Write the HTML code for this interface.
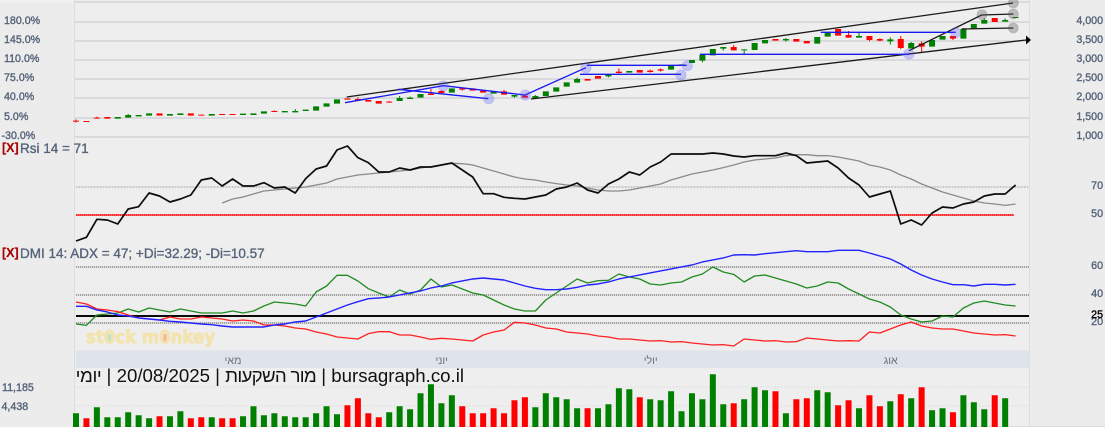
<!DOCTYPE html>
<html lang="he"><head><meta charset="utf-8"><title>bursagraph</title>
<style>
html,body{margin:0;padding:0;width:1105px;height:427px;overflow:hidden;background:#ececec}
svg{position:absolute;left:0;top:0;font-family:"Liberation Sans",sans-serif}
svg *{vector-effect:non-scaling-stroke}
.n{fill:none;stroke-linejoin:round}
.ax{font-size:10.67px;fill:#56647a;stroke:#56647a;stroke-width:.38}
.mo{font-size:10.67px;fill:#6a7079;text-anchor:middle}
.end{text-anchor:end}
.ti{font-size:13.5px;fill:#56647a;stroke:#56647a;stroke-width:.35}
.x{font-size:12.5px;font-weight:bold;fill:#a80000;stroke:#a80000;stroke-width:.15}
#t{position:absolute;right:641px;top:365px;height:22px;line-height:22px;direction:rtl;white-space:nowrap;font:18.67px/22px "Liberation Sans","Noto Sans CJK JP",sans-serif;color:#111}
#t span{letter-spacing:-.7px}
#t span.y{letter-spacing:-.4px}
</style></head><body>
<svg width="1105" height="427" viewBox="0 0 1105 427">
<rect x="0" y="0" width="1105" height="427" fill="#ececec"/>
<rect x="75" y="0" width="954" height="427" fill="#eeeeee"/>
<rect x="0" y="0" width="74" height="2" fill="#f1f1f1"/>
<path d="M74.5 0V427M1029.5 0V427" stroke="#dedede" stroke-width="1"/>
<path d="M75 426.5H1105" stroke="#dcdcdc" stroke-width="1"/>

<!-- price grid -->
<path d="M75 2H1029M75 22H1029M75 41H1029M75 60H1029M75 79H1029M75 98H1029M75 118H1029M75 137H1029" stroke="#d1d4d7" stroke-width="1.6"/>

<!-- candles -->
<g transform="translate(76 0) scale(10.44 .33333)">
<path class="n" stroke="#008000" stroke-width="1" d="M5 342V353M21 327V337M31 288V303M32 290V297M42 285V293M44 285V295M48 233V248M51 225V232M57 197V209M60 165V187M62 141V152M64 148V163M68 114V125M75 99V113M78 112V134M80 126V145M85 84V116M87 55V71M89 55V65"/>
<path class="n" stroke="#ff0000" stroke-width="1" d="M0 358V368M2 350V356M19 331V336M27 292V302M30 303V308M34 267V285M35 270V279M37 265V272M41 270V284M52 205V220M55 209V218M56 205V215M63 135V151M74 93V113M76 108V124M77 115V124M79 108V147M81 124V157M84 108V120"/>
<path class="n" stroke="#008000" stroke-width="6" d="M4 351V356M5 345V353M6 345V349M7 340V347M9 342V347M10 340V345M13 342V347M16 341V345M17 340V345M18 334V341M20 333V337M21 333V337M22 329V333M23 319V332M24 310V320M25 298V311M31 294V303M32 293V297M33 282V293M36 265V278M40 274V281M42 285V290M44 288V295M45 274V288M46 262V275M47 247V260M48 237V248M51 225V229M53 213V218M57 197V209M58 193V197M59 180V189M60 165V182M61 147V166M62 141V146M64 148V151M65 129V150M66 120V130M68 117V121M71 111V131M72 98V110M75 108V113M78 118V124M80 129V145M82 120V140M83 108V119M85 87V116M86 72V85M87 60V71M89 60V65M90 51V54"/>
<path class="n" stroke="#ff0000" stroke-width="6" d="M0 362V365M1 363V366M2 353V356M3 351V356M8 340V347M11 340V347M12 344V347M14 342V345M15 342V345M19 333V336M26 295V299M27 297V302M28 300V305M29 303V311M30 305V308M34 281V285M35 273V279M37 265V269M38 265V272M39 271V278M41 274V284M43 287V293M49 237V242M50 228V236M52 215V219M54 210V218M55 212V216M56 208V212M63 141V151M67 117V122M69 117V125M70 123V130M73 87V107M74 105V113M76 108V120M77 117V122M79 117V144M81 130V140M84 108V116M88 54V66"/>
</g>

<!-- trendlines -->
<g class="n" stroke="#1a1a1a" stroke-width="1.3">
<path d="M346.7 97L1013 3"/>
<path d="M531 99L1026 40"/>
<path d="M909 50.7L981.7 15L1013.3 14"/>
<path d="M961.7 29L1013.3 28"/>
</g>
<path d="M1026 35.5L1031 40L1026 44.5Z" fill="#000"/>
<g class="n" stroke="#1818f0" stroke-width="1.3">
<path d="M345 102.7L443.3 85.7L525 95L586 67.7"/>
<path d="M398 89.3L488.3 98.7"/>
<path d="M586.7 65.3H686.7"/>
<path d="M580 74.3H681"/>
<path d="M700 54.3H909"/>
<path d="M820.7 32.3H955.7"/>
</g>
<g fill="#5050ff" fill-opacity=".28" stroke="#5050ff" stroke-opacity=".12">
<circle cx="443.3" cy="86" r="5.3"/><circle cx="488.7" cy="98.7" r="5.3"/><circle cx="525.3" cy="95" r="5.3"/><circle cx="586" cy="68" r="5.3"/><circle cx="687.3" cy="65.7" r="5.3"/><circle cx="681" cy="75" r="5.3"/><circle cx="909" cy="54" r="5.3"/><circle cx="955.7" cy="32.7" r="5.3"/>
</g>
<g fill="#555" fill-opacity=".33" stroke="#555" stroke-opacity=".2">
<circle cx="982" cy="14.7" r="5"/><circle cx="1013.3" cy="14" r="5"/><circle cx="1013.3" cy="28" r="5"/><circle cx="1013.3" cy="3" r="5"/>
</g>

<!-- price axes -->
<g class="ax">
<text x="4" y="24">180.0%</text><text x="4" y="43">145.0%</text><text x="4" y="62">110.0%</text><text x="4" y="81">75.0%</text><text x="4" y="100">40.0%</text><text x="4" y="120">5.0%</text><text x="1.5" y="139">-30.0%</text>
</g>
<g class="ax end">
<text x="1103" y="24">4,000</text><text x="1103" y="43">3,500</text><text x="1103" y="62">3,000</text><text x="1103" y="81">2,500</text><text x="1103" y="100">2,000</text><text x="1103" y="120">1,500</text><text x="1103" y="139">1,000</text>
</g>

<!-- RSI -->
<text class="x" x="2" y="152">[X]</text>
<text class="ti" x="20" y="153">Rsi 14 = 71</text>
<path d="M76 187H1029" stroke="#d8d8d8" stroke-width="1.5"/>
<path d="M76 187H1029" stroke="#aaa" stroke-width="1" stroke-dasharray="1 2"/>
<path d="M76 215H1014" stroke="#ff9999" stroke-width="2"/>
<path d="M76 215H1014" stroke="#f00" stroke-width="1.5" stroke-dasharray="1.5 .5"/>
<g transform="translate(76 140) scale(10.44 .33333)">
<polyline class="n" stroke="#8a8a8a" stroke-width="1.3" points="14,189 15,177 16,171 17,162 18,153 19,150 20,147 21,144 22,141 23,135 24,129 25,117 26,111 27,105 28,102 29,99 30,96 31,93 32,90 33,84 34,80 35,75 36,70 37,71 38,75 39,84 40,93 41,102 42,111 43,117 44,120 45,126 46,131 47,135 48,138 49,144 50,150 51,153 52,153 53,150 54,144 55,138 56,132 57,120 58,111 59,102 60,96 61,90 62,83 63,75 64,66 65,60 66,57 67,54 68,47 69,44 70,44 71,47 72,47 73,51 74,57 75,63 76,75 77,81 78,90 79,105 80,117 81,132 82,144 83,156 84,165 85,174 86,183 87,189 88,192 89,196 90,192"/>
<polyline class="n" stroke="#0c0c0c" stroke-width="1.7" points="0,303 1,292 2,238 3,240 4,252 5,207 6,200 7,159 8,168 9,186 10,177 11,165 12,120 13,114 14,138 15,117 16,138 17,138 18,128 19,144 20,141 21,159 22,116 23,87 24,78 25,30 26,18 27,53 28,68 29,96 30,96 31,84 32,90 33,81 34,81 35,75 36,69 37,90 38,111 39,161 40,161 41,172 42,175 43,177 44,171 45,165 46,147 47,141 48,129 49,150 50,159 51,132 52,117 53,96 54,105 55,81 56,66 57,42 58,42 59,42 60,42 61,39 62,42 63,48 64,51 65,47 66,47 67,47 68,39 69,47 70,69 71,66 72,63 73,84 74,114 75,135 76,171 77,162 78,153 79,252 80,240 81,255 82,219 83,201 84,204 85,192 86,186 87,168 88,162 89,162 90,135"/>
</g>
<g class="ax end"><text x="1103" y="189">70</text><text x="1103" y="217">50</text></g>

<!-- DMI -->
<text class="x" x="2" y="257">[X]</text>
<text class="ti" x="20" y="258">DMI 14: ADX = 47; +Di=32.29; -Di=10.57</text>
<path d="M76 267H1029M76 295H1029M76 323H1029" stroke="#d4d4d4" stroke-width="1.2"/>
<path d="M76 267H1029M76 295H1029M76 323H1029" stroke="#777" stroke-width="1.2" stroke-dasharray="1 1"/>
<path d="M76 316H1029" stroke="#0a0a0a" stroke-width="2"/>
<!-- watermark -->
<text x="86" y="343" font-family="'DejaVu Sans',sans-serif" font-weight="bold" font-size="18" fill="#f3e3ae" stroke="#f3e3ae" stroke-width="1" textLength="129" lengthAdjust="spacingAndGlyphs">st0ck m0nkey</text>
<rect x="108" y="334" width="3" height="7" fill="#bfe6c0"/>
<rect x="163.5" y="334" width="3" height="7" fill="#f5b3a8"/>
<g transform="translate(76 245) scale(10.44 .33333)">
<polyline class="n" stroke="#228b22" stroke-width="1.3" points="0,237 1,241 2,210 3,207 4,204 5,192 6,201 7,189 8,195 9,201 10,192 11,198 12,204 13,204 14,204 15,198 16,204 17,198 18,183 19,171 20,174 21,177 22,183 23,141 24,123 25,91 26,91 27,108 28,131 29,144 30,156 31,135 32,147 33,135 34,102 35,126 36,120 37,132 38,144 39,150 40,165 41,180 42,192 43,198 44,198 45,165 46,144 47,123 48,102 49,114 50,107 51,106 52,87 53,96 54,102 55,117 56,120 57,114 58,111 59,96 60,87 61,66 62,81 63,88 64,111 65,93 66,90 67,99 68,108 69,117 70,129 71,123 72,111 73,114 74,132 75,147 76,162 77,171 78,186 79,210 80,222 81,231 82,228 83,213 84,216 85,189 86,174 87,168 88,174 89,180 90,183"/>
<polyline class="n" stroke="#ff2020" stroke-width="1.3" points="0,171 1,177 2,192 3,195 4,200 5,210 6,219 7,222 8,225 9,216 10,222 11,222 12,216 13,219 14,222 15,228 16,225 17,228 18,240 19,240 20,243 21,249 22,252 23,261 24,267 25,276 26,279 27,282 28,266 29,260 30,260 31,270 32,270 33,276 34,283 35,280 36,282 37,285 38,288 39,270 40,261 41,255 42,232 43,234 44,240 45,249 46,252 47,261 48,264 49,267 50,273 51,276 52,282 53,282 54,285 55,288 56,287 57,291 58,290 59,294 60,297 61,300 62,299 63,303 64,282 65,285 66,288 67,287 68,291 69,290 70,279 71,282 72,285 73,288 74,287 75,288 76,261 77,264 78,252 79,240 80,231 81,243 82,249 83,252 84,252 85,258 86,264 87,267 88,270 89,269 90,273"/>
<polyline class="n" stroke="#2222ff" stroke-width="1.4" points="0,184 1,184 2,195 3,201 4,210 5,213 6,219 7,222 8,225 9,229 10,231 11,234 12,237 13,239 14,243 15,246 16,246 17,246 18,246 19,240 20,237 21,231 22,228 23,216 24,204 25,192 26,180 27,170 28,161 29,159 30,156 31,150 32,144 33,138 34,129 35,123 36,114 37,108 38,102 39,99 40,102 41,105 42,114 43,123 44,130 45,134 46,134 47,132 48,127 49,120 50,117 51,111 52,102 53,96 54,90 55,84 56,78 57,72 58,66 59,60 60,51 61,45 62,39 63,30 64,29 65,30 66,26 67,23 68,20 69,17 70,20 71,20 72,20 73,16 74,16 75,16 76,24 77,33 78,42 79,57 80,75 81,90 82,102 83,111 84,119 85,119 86,123 87,118 88,118 89,120 90,118"/>
</g>
<g class="ax end"><text x="1103" y="269">60</text><text x="1103" y="297">40</text><text x="1103" y="325">20</text><text x="1103" y="318" style="fill:#000;stroke:#000">25</text></g>

<!-- month strip -->
<rect x="76" y="350.5" width="953" height="17.5" fill="#dfe3ea"/>
<text class="mo" x="233" y="364">מאי</text>
<text class="mo" x="441.7" y="364">יוני</text>
<text class="mo" x="650.7" y="364">יולי</text>
<text class="mo" x="890.7" y="364">אוג</text>

<!-- volume -->
<path d="M76 387H1029M76 406H1029" stroke="#d6d6d6" stroke-width="1" stroke-dasharray="1 2"/>
<g class="ax"><text x="2" y="391">11,185</text><text x="1.5" y="410">4,438</text></g>
<g transform="translate(76 .3) scale(10.44 1)">
<path class="n" stroke="#008000" stroke-width="6" d="M0 413V427M2 407V427M3 417V427M4 417V427M5 412V427M6 415V427M7 418V427M9 416V427M10 411V427M13 417V427M16 416V427M17 406V427M18 415V427M19 413V427M20 416V427M21 417V427M22 417V427M23 413V427M24 406V427M25 414V427M30 412V427M31 406V427M32 409V427M33 393V427M34 384V427M35 403V427M36 395V427M44 407V427M45 393V427M46 397V427M47 399V427M48 408V427M50 408V427M51 404V427M52 388V427M53 389V427M55 399V427M56 400V427M57 391V427M58 411V427M59 393V427M60 399V427M61 374V427M62 404V427M64 399V427M65 387V427M66 390V427M68 413V427M71 390V427M72 392V427M75 408V427M78 401V427M80 398V427M82 410V427M83 408V427M85 395V427M86 402V427M87 409V427M89 398V427"/>
<path class="n" stroke="#ff0000" stroke-width="6" d="M1 418V427M8 416V427M11 418V427M12 417V427M14 418V427M15 418V427M26 405V427M27 398V427M28 413V427M29 417V427M37 406V427M38 413V427M39 413V427M40 408V427M41 413V427M42 400V427M43 397V427M49 408V427M54 397V427M63 403V427M67 391V427M69 399V427M70 398V427M73 405V427M74 400V427M76 395V427M77 406V427M79 394V427M81 387V427M84 412V427M88 395V427"/>
</g>
</svg>
<div id="t">bursagraph.co.il | <span>מור השקעות</span> | 20/08/2025 | <span class="y">יומי</span></div>
</body></html>
